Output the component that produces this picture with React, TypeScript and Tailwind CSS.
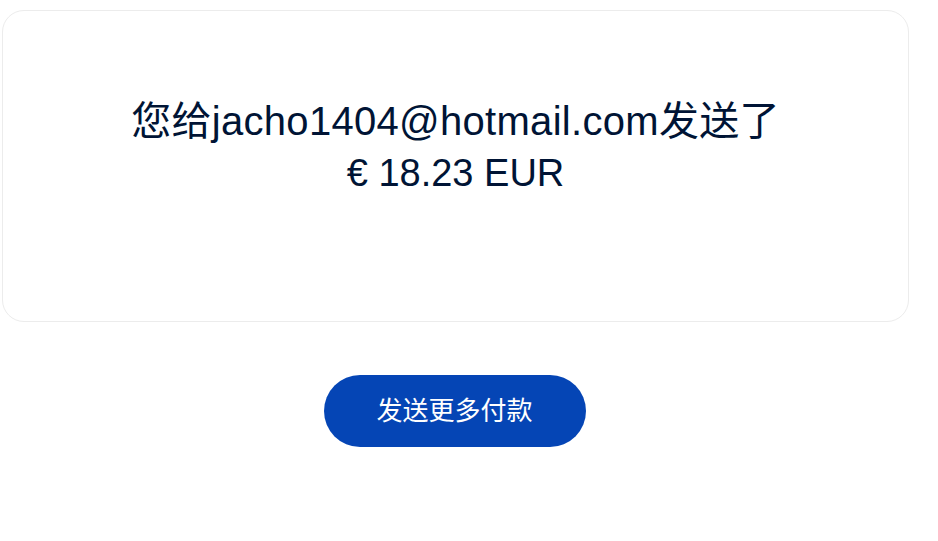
export default function App() {
  return (
    <div
      className="min-h-screen bg-white text-[#001435]"
      style={{ fontFamily: '"Liberation Sans", "Noto Sans CJK SC", sans-serif' }}
    >
      {/* CONFIRMATION CARD */}
      <div className="ml-[2px] mt-[10px] w-[907px] h-[312px] rounded-[22px] border border-[#ececec] bg-white pt-[84px] text-center">
        <h1 className="font-normal">
          <span className="block text-[40px] leading-[52px] tracking-[0.3px]">
            您给jacho1404@hotmail.com发送了
          </span>
          <span className="block text-[38px] leading-[52px]">€ 18.23 EUR</span>
        </h1>
      </div>

      {/* ACTION */}
      <div className="w-[909px] flex justify-center mt-[53px]">
        <button className="h-[72px] w-[262px] rounded-full bg-[#0545b5] text-white text-[26px]">
          发送更多付款
        </button>
      </div>
    </div>
  );
}
